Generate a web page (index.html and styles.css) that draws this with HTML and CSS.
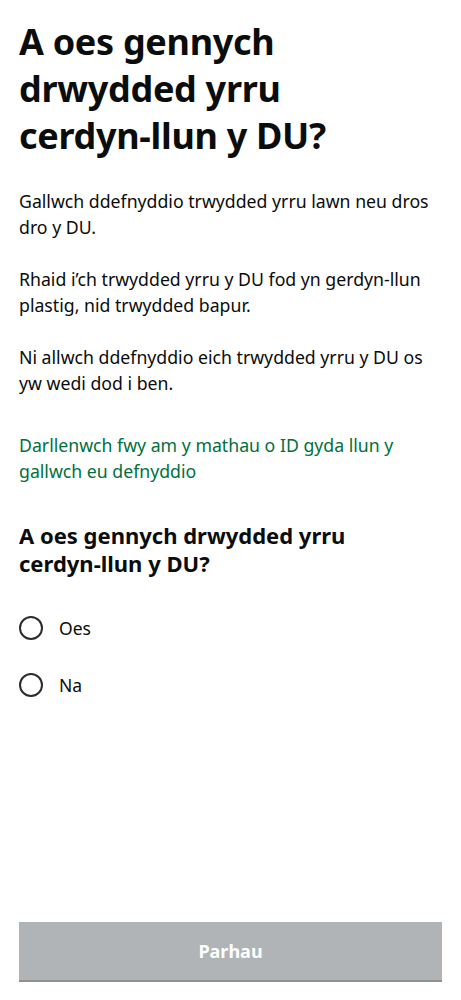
FILE: index.html
```html
<!DOCTYPE html>
<html lang="cy">
<head>
<meta charset="utf-8">
<link rel="stylesheet" href="styles.css">
</head>
<body>
<main class="page">
  <div class="content">
    <h1 class="title">A oes gennych drwydded yrru <span class="nowrap">cerdyn-llun</span> y DU?</h1>
    <p class="body">Gallwch ddefnyddio trwydded yrru lawn neu dros dro y DU.</p>
    <p class="body">Rhaid i’ch trwydded yrru y DU fod yn gerdyn-llun plastig, nid trwydded bapur.</p>
    <p class="body">Ni allwch ddefnyddio eich trwydded yrru y DU os yw wedi dod i ben.</p>
    <a class="link" href="#">Darllenwch fwy am y mathau o ID gyda llun y gallwch eu defnyddio</a>
    <h2 class="question">A oes gennych drwydded yrru <span class="nowrap">cerdyn-llun</span> y DU?</h2>
    <div class="radios">
      <label class="radio"><span class="circle"></span><span class="radio-label">Oes</span></label>
      <label class="radio"><span class="circle"></span><span class="radio-label">Na</span></label>
    </div>
  </div>
  <button class="button">Parhau</button>
</main>
</body>
</html>
```
FILE: styles.css
```css
html, body {
  margin: 0;
  padding: 0;
  background: #ffffff;
}
body {
  font-family: "Noto Sans", "Liberation Sans", sans-serif;
  color: #0b0c0c;
}
.page {
  height: 1000px;
  box-sizing: border-box;
  padding: 18px 19px 0 19px;
  display: flex;
  flex-direction: column;
}
.content {
  flex: 1;
}
.nowrap {
  white-space: nowrap;
}
.title {
  font-size: 36px;
  line-height: 47px;
  font-weight: 700;
  margin: 0 0 29px 0;
  letter-spacing: -0.3px;
}
.body {
  font-size: 17.7px;
  line-height: 26px;
  margin: 0 0 26px 0;
}
.link {
  display: block;
  color: #00703c;
  text-decoration: none;
  font-size: 17.7px;
  line-height: 26px;
  margin-top: 36px;
}
.question {
  font-size: 22px;
  line-height: 28px;
  font-weight: 700;
  margin: 37px 0 0 0;
}
.radios {
  margin-top: 39px;
  display: flex;
  flex-direction: column;
}
.radio {
  display: flex;
  align-items: center;
  height: 24px;
  margin-bottom: 33px;
}
.circle {
  width: 24px;
  height: 24px;
  box-sizing: border-box;
  border: 2px solid #2b2c2e;
  border-radius: 50%;
  flex: none;
}
.radio-label {
  font-size: 17.5px;
  margin-left: 16px;
}
.button {
  height: 60px;
  background: #b1b4b6;
  border: none;
  border-bottom: 2px solid #929191;
  color: #ffffff;
  font-family: inherit;
  font-size: 18px;
  font-weight: 700;
  width: 100%;
  margin: 0 0 18px 0;
}
```
